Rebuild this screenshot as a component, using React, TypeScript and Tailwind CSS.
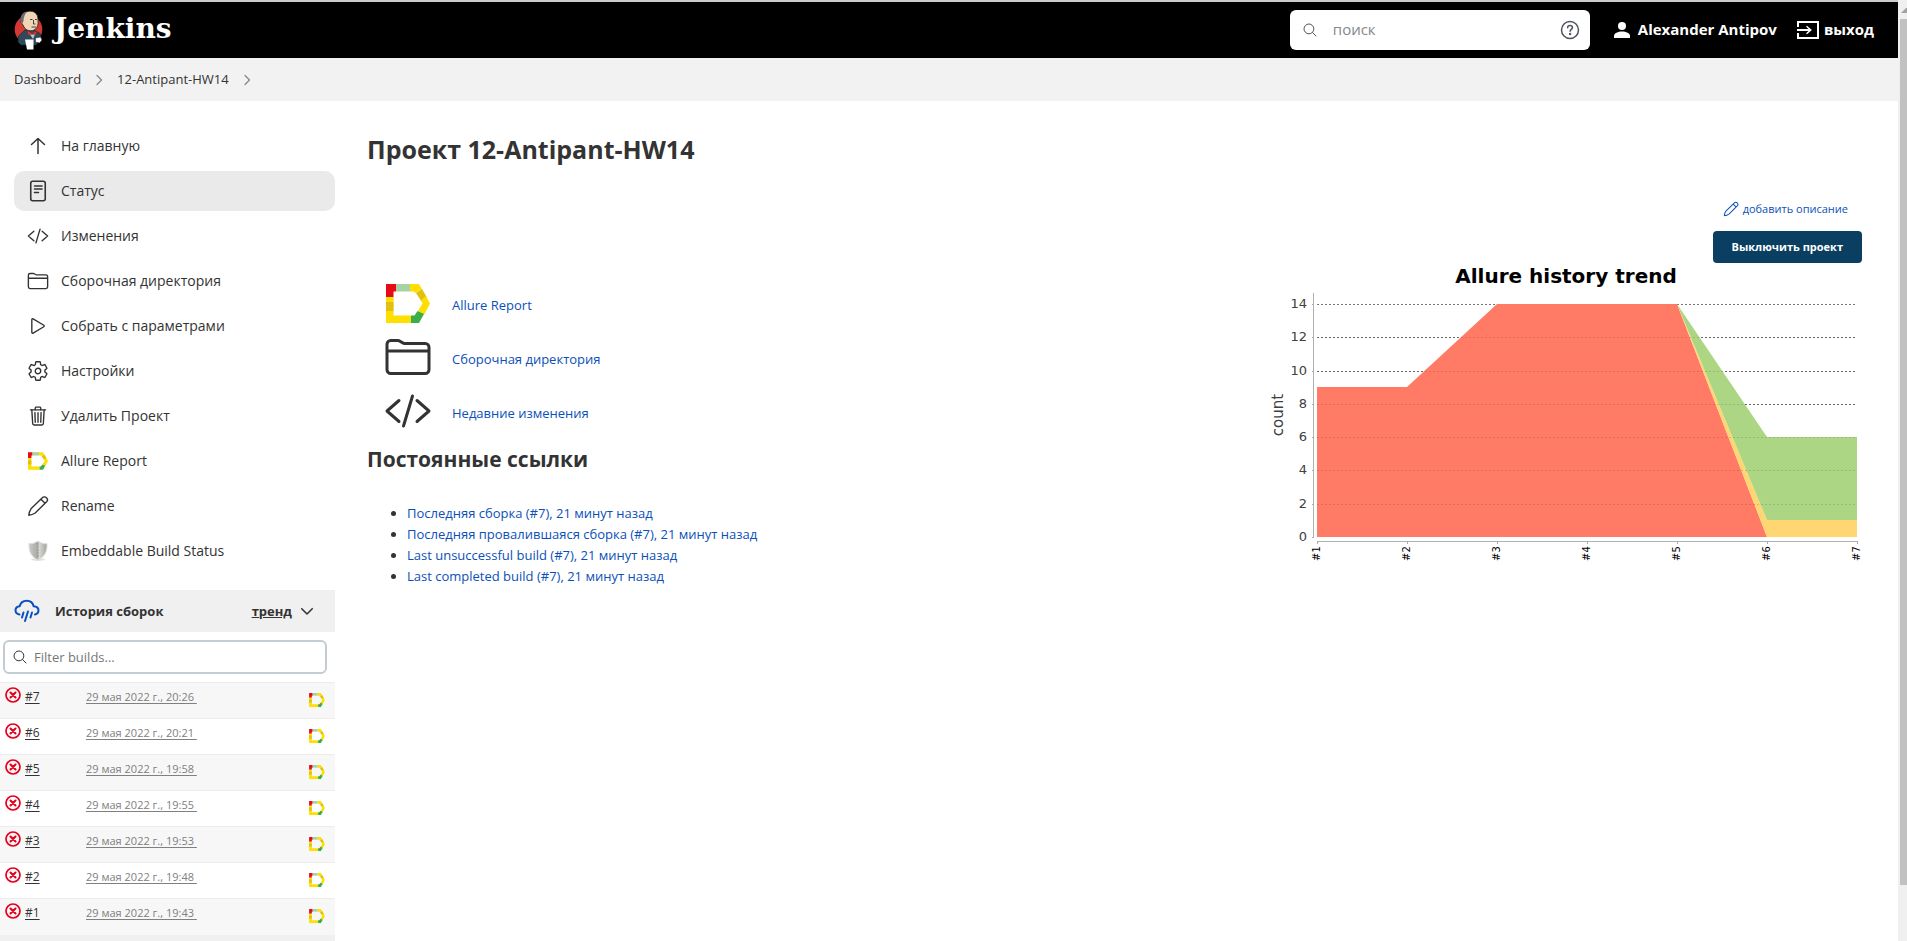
import React from "react";
import {
  IoCodeSlashOutline,
  IoFolderOutline,
  IoPlayOutline,
  IoSearchOutline,
  IoSettingsOutline,
  IoTrashOutline,
} from "react-icons/io5";

function JenkinsLogo() {
  return (
    <svg viewBox="0 0 30 40" className="h-10 w-[30px]" aria-hidden="true">
      <ellipse cx="14.5" cy="19.5" rx="13.8" ry="14" fill="#d33833" />
      <path d="M4.500 26 11 20h9l6 3.500 1.500 5L22 35H7L4 32z" fill="#2c4a5c" stroke="#14222b" strokeWidth=".6" />
      <path d="M7 9C8 3 13 .8 17 1.200c5 .5 7 4 7 8.500 0 3 .4 5-1 7.500-1.500 2.500-4 3.800-7 3.600-4-.3-6-3-7-6C7.500 13.500 6 12 7 9z" fill="#f0d6b7" stroke="#231f20" strokeWidth=".8" />
      <path d="M6.500 11C6 5 9.500 1.800 13 1.500 11 4 9.500 7 9.500 11l-1.300 3z" fill="#6d6b6d" />
      <path d="M16 9.500h2.500M21 9.500h2M19.500 10v4h2M17.500 17h4.500" stroke="#231f20" strokeWidth=".8" fill="none" />
      <path d="M13 20.500l5 2.500 4-2 .8 4-4.300-1.500-4.500 2z" fill="#d33833" stroke="#81211e" strokeWidth=".5" />
      <path d="M16 24.500h5l-2 4.500z" fill="#b9c7d2" />
      <path d="M11 29.500h8.500V39.500H13z" fill="#fff" />
      <path d="M21.500 28l5-1 1.500 3-2.500 3-4-1z" fill="#fff" stroke="#231f20" strokeWidth=".5" />
    </svg>
  );
}

function AllureIcon({ className }: { className: string }) {
  return (
    <svg viewBox="0 0 44 39" className={className} aria-hidden="true">
      <path d="M0 0h10v7.500H7.500V13H0z" fill="#e60b14" />
      <path d="M10 0h14v7.500H10z" fill="#a6d2a5" />
      <path d="M24 0h9l3 5-6.500 4-1.500-1.500h-4z" fill="#ffdf00" />
      <path d="M36 5l5 8.500-5.500 4L30 9z" fill="#e0c010" />
      <path d="M40 12l4 7.500L38 31l-6-4 4.500-7.500-1.500-3z" fill="#ffdf00" />
      <path d="M31.500 27l6.500 3-5 9h-8v-7.500h3.500z" fill="#3cae49" />
      <path d="M0 13h7.500v18.500H25V39H0z" fill="#ffdf00" />
      <path d="M0 18h7.500v9H0z" fill="#e0c010" />
    </svg>
  );
}

function ArrowUpIcon() {
  return (
    <svg viewBox="0 0 22 22" className="size-[22px]" fill="none" stroke="currentColor" strokeWidth="1.500" strokeLinecap="round" strokeLinejoin="round" aria-hidden="true">
      <path d="M4.500 9.500L11 3.500l6.500 6M11 4v14.500" />
    </svg>
  );
}

function StatusIcon() {
  return (
    <svg viewBox="0 0 22 22" className="size-[22px]" fill="none" stroke="currentColor" strokeWidth="1.600" strokeLinecap="round" aria-hidden="true">
      <rect x="3.750" y="1.250" width="14.500" height="19.500" rx="2" />
      <path d="M7.500 6h7.500M7.500 9h7.500M7.500 12.500h4" />
    </svg>
  );
}

function PencilIcon({ className }: { className: string }) {
  return (
    <svg viewBox="0 0 22 22" className={className} fill="none" stroke="currentColor" strokeWidth="1.400" strokeLinecap="round" strokeLinejoin="round" aria-hidden="true">
      <path d="M1.800 20.200c.2-2.500 1-4.700 2.200-6.400L15.300 2.800a2.900 2.900 0 0 1 4.300 4L8.200 18c-1.800 1.200-4 2-6.400 2.200zM14 4.200l4 4" />
    </svg>
  );
}

function ShieldIcon() {
  return (
    <svg viewBox="0 0 22 22" className="size-[22px]" aria-hidden="true">
      <defs>
        <linearGradient id="shield" x1="0" x2="1">
          <stop offset="0" stopColor="#c9c9c6" />
          <stop offset=".48" stopColor="#a9a9a5" />
          <stop offset=".55" stopColor="#d9d9d6" />
          <stop offset="1" stopColor="#a2a29e" />
        </linearGradient>
      </defs>
      <ellipse cx="11" cy="19.5" rx="7" ry="1.500" fill="#e2e2e2" />
      <path d="M2 3.500c3 .6 6-.5 9-2.500 3 2 6 3.100 9 2.500.3 7-1.500 13-9 16.500C3.500 16.500 1.700 10.500 2 3.500z" fill="url(#shield)" stroke="#deded9" strokeWidth="1" />
      <path d="M11 3v14" stroke="#8f8f8b" strokeWidth=".8" strokeDasharray="2 1" />
    </svg>
  );
}

function RainIcon() {
  return (
    <svg viewBox="0 0 26 24" className="h-6 w-[26px]" fill="none" stroke="#0b50c0" strokeWidth="2" strokeLinecap="round" strokeLinejoin="round" aria-hidden="true">
      <path d="M5.500 15.500C3 15 1.500 13.500 1.500 11.500c0-2.300 1.700-4 4.200-4.200C6.500 4 9.300 1.800 12.700 1.800c3.600 0 6.200 2.200 6.900 5.500 3 .2 4.900 1.900 4.900 4.300 0 2-1.200 3.500-3.500 3.900" />
      <path d="M9.500 13.500l-1.500 5M14 12.500l-3 9.500M18 13.500l-1.500 5" />
    </svg>
  );
}

function FailedIcon() {
  return (
    <svg viewBox="0 0 16 16" className="size-4" fill="none" stroke="#e6001f" aria-hidden="true">
      <circle cx="8" cy="8" r="7" strokeWidth="1.700" />
      <path d="M5.500 5.500l5 5M10.500 5.500l-5 5" strokeWidth="2.100" strokeLinecap="round" />
    </svg>
  );
}

function Chevron({ className }: { className: string }) {
  return (
    <svg viewBox="0 0 12 12" className={className} fill="none" stroke="currentColor" strokeWidth="1.300" strokeLinecap="round" strokeLinejoin="round" aria-hidden="true">
      <path d="M4 1.500L8.500 6 4 10.500" />
    </svg>
  );
}

const io = "size-[22px]";
const menu: { label: string; icon: React.ReactNode; active?: boolean }[] = [
  { label: "На главную", icon: <ArrowUpIcon /> },
  { label: "Статус", icon: <StatusIcon />, active: true },
  { label: "Изменения", icon: <IoCodeSlashOutline className={io} /> },
  { label: "Сборочная директория", icon: <IoFolderOutline className={io} /> },
  { label: "Собрать с параметрами", icon: <IoPlayOutline className={io} /> },
  { label: "Настройки", icon: <IoSettingsOutline className={io} /> },
  { label: "Удалить Проект", icon: <IoTrashOutline className={io} /> },
  { label: "Allure Report", icon: <AllureIcon className="h-[18px] w-5" /> },
  { label: "Rename", icon: <PencilIcon className="size-[22px]" /> },
  { label: "Embeddable Build Status", icon: <ShieldIcon /> },
];

const builds = [
  ["#7", "29 мая 2022 г., 20:26"],
  ["#6", "29 мая 2022 г., 20:21"],
  ["#5", "29 мая 2022 г., 19:58"],
  ["#4", "29 мая 2022 г., 19:55"],
  ["#3", "29 мая 2022 г., 19:53"],
  ["#2", "29 мая 2022 г., 19:48"],
  ["#1", "29 мая 2022 г., 19:43"],
];

const permalinks = [
  "Последняя сборка (#7), 21 минут назад",
  "Последняя провалившаяся сборка (#7), 21 минут назад",
  "Last unsuccessful build (#7), 21 минут назад",
  "Last completed build (#7), 21 минут назад",
];

function Header() {
  return (
    <header className="flex h-14 items-center bg-black pr-6 pl-[14px] text-white">
      <a href="#home" className="flex items-center gap-[10px]">
        <JenkinsLogo />
        <span className="pb-0.5 font-['DejaVu_Serif','Liberation_Serif',serif] text-[28px] leading-8 font-bold">Jenkins</span>
      </a>
      <div className="ml-auto flex h-10 w-[300px] items-center rounded-md bg-white pr-[10px] pl-3 text-[#4d545d]">
        <IoSearchOutline className="size-4 shrink-0" />
        <input aria-label="поиск" placeholder="поиск" className="ml-[15px] w-full min-w-0 text-[15px] text-[#333] outline-none placeholder:text-[#85888c]" />
        <a href="#search-help" aria-label="Справка" className="shrink-0">
          <svg viewBox="0 0 20 20" className="size-5" fill="none" stroke="currentColor" strokeWidth="1.500" strokeLinecap="round">
            <circle cx="10" cy="10" r="8.500" />
            <path d="M7.600 7.800c0-1.300 1-2.200 2.400-2.200s2.400.9 2.400 2.100c0 1.600-2.300 1.700-2.300 3.500" />
            <circle cx="10.100" cy="13.900" r=".5" fill="currentColor" />
          </svg>
        </a>
      </div>
      <a href="#user" className="ml-6 flex items-center gap-2 text-[15px] font-bold">
        <svg viewBox="0 0 16 16" className="size-4" fill="currentColor" aria-hidden="true">
          <circle cx="8" cy="4" r="4" />
          <path d="M0 16v-2c0-3 4-4.500 8-4.500s8 1.500 8 4.500v2z" />
        </svg>
        Alexander Antipov
      </a>
      <a href="#logout" className="ml-5 flex items-center gap-[5px] text-[15px] font-bold">
        <svg viewBox="0 0 22 18" className="h-[18px] w-[22px]" fill="none" stroke="currentColor" strokeWidth="2" aria-hidden="true">
          <path d="M1 6V1h20v16H1v-5M0 9h13" />
          <path d="M9.500 5.200L13.800 9l-4.300 3.800" strokeWidth="1.500" />
        </svg>
        выход
      </a>
    </header>
  );
}

function Sidebar() {
  return (
    <aside className="w-[335px] shrink-0 pt-[25px]">
      <nav className="flex flex-col gap-[5px] pl-[14px]">
        {menu.map((m) => (
          <a
            key={m.label}
            href="#task"
            className={
              m.active
                ? "flex h-10 items-center gap-3 rounded-[10px] bg-[#eaeaea] pl-[13px]"
                : "flex h-10 items-center gap-3 rounded-[10px] pl-[13px]"
            }
          >
            <span className="flex w-[22px] justify-center">{m.icon}</span>
            {m.label}
          </a>
        ))}
      </nav>
      <section className="mt-[19px]">
        <div className="flex h-[42px] items-center bg-[#f0f0f0] pr-[21px] pl-[14px]">
          <RainIcon />
          <h2 className="ml-[15px] text-[13px] font-bold">История сборок</h2>
          <a href="#trend" className="ml-auto flex items-center gap-2">
            <span className="text-[13px] font-bold underline">тренд</span>
            <Chevron className="size-[14px] rotate-90" />
          </a>
        </div>
        <div className="mt-2 mr-2 ml-[3px] flex h-[34px] items-center gap-[6px] rounded-md border-2 border-[#c3ccd1] px-[7px]">
          <IoSearchOutline className="size-4 shrink-0" />
          <input aria-label="Filter builds..." placeholder="Filter builds..." className="w-full min-w-0 text-[13px] outline-none placeholder:text-[#777]" />
        </div>
        <table className="mt-2 w-full table-fixed border-collapse text-xs">
          <tbody>
            {builds.map(([id, date]) => (
              <tr key={id} className="h-9 border-t border-[#ededed] align-top odd:bg-[#f7f7f7]">
                <td className="w-[86px] pt-1 pl-[5px]">
                  <span className="flex items-start gap-1">
                    <FailedIcon />
                    <a href="#build" className="pt-0.5 underline underline-offset-2">{id}</a>
                  </span>
                </td>
                <td className="pt-[6px] text-[11px] leading-4">
                  <a href="#build" className="whitespace-pre text-[#808080] underline underline-offset-2">{date + " "}</a>
                </td>
                <td className="w-[26px] pt-[10px]">
                  <a href="#allure" aria-label="Allure Report"><AllureIcon className="h-[14px] w-4" /></a>
                </td>
              </tr>
            ))}
          </tbody>
        </table>
        <div className="h-[7px] bg-[#f0f0f0]" />
      </section>
    </aside>
  );
}

const ticks = [0, 2, 4, 6, 8, 10, 12, 14];

function TrendChart() {
  const y = (v: number) => 280 - Math.round((v * 233) / 14);
  return (
    <svg viewBox="0 6 600 307" className="h-[307px] w-[600px]" role="img" aria-label="Allure history trend" fontFamily="'DejaVu Sans', sans-serif">
      <text x="304" y="26" textAnchor="middle" fontSize="20" fontWeight="bold" fill="#000">Allure history trend</text>
      {ticks.map((t) => (
        <g key={t}>
          {t > 0 && <path d={`M55 ${y(t) + 0.5}H595`} stroke="#777" strokeDasharray="2 2" />}
          <path d={`M50 ${y(t) + 0.5}h2`} stroke="#aaa" />
          <text x="45" y={y(t) + 4} textAnchor="end" fontSize="13" fill="#404040">{t}</text>
        </g>
      ))}
      <path d={`M55 280V${y(9)}H145L235 ${y(14)}H415L505 280z`} fill="#ff7b65" />
      <path d={`M415 ${y(14)}L505 ${y(1)}H595V280H505z`} fill="#ffd672" />
      <path d={`M415 ${y(14)}L505 ${y(6)}H595V${y(1)}H505z`} fill="#add684" />
      {ticks.slice(1, 7).map((t) => (
        <path key={t} d={`M55 ${y(t) + 0.5}H595`} stroke="#000" strokeOpacity=".13" strokeDasharray="2 2" />
      ))}
      <path d="M51.500 36V280M55 284.500H595" stroke="#b0b0b0" fill="none" />
      <text transform="translate(21 158) rotate(-90)" textAnchor="middle" fontSize="15" fill="#404040">count</text>
      {[1, 2, 3, 4, 5, 6, 7].map((n) => (
        <g key={n}>
          <path d={`M${55.5 + (n - 1) * 90} 284v3`} stroke="#aaa" />
          <text transform={`translate(${58 + (n - 1) * 90} 304) rotate(-90)`} fontSize="10" fill="#000">{`#${n}`}</text>
        </g>
      ))}
    </svg>
  );
}

export default function App() {
  return (
    <div className="flex h-screen overflow-hidden bg-white font-['Open_Sans','Noto_Sans',sans-serif] text-sm text-[#333]">
      <div className="min-w-0 flex-1 border-t-2 border-[#c9cccf]">
        <Header />
        <nav aria-label="breadcrumb" className="flex h-[43px] items-center gap-3 bg-[#f2f2f2] pl-[14px] text-[13px]">
          <a href="#dashboard">Dashboard</a>
          <Chevron className="size-3 text-[#888]" />
          <a href="#project">12-Antipant-HW14</a>
          <Chevron className="size-3 text-[#888]" />
        </nav>
        <div className="flex">
          <Sidebar />
          <main className="min-w-0 flex-1 pt-[30px] pr-9 pl-8">
            <h1 className="text-[25px] leading-9 font-bold">Проект 12-Antipant-HW14</h1>
            <div className="flex justify-between pt-8">
              <div className="pt-20">
                <div className="flex flex-col gap-[6px] pl-[17px] text-[13px] font-medium text-[#0b50b8]">
                  <a href="#allure" className="flex h-12 items-center gap-5"><AllureIcon className="h-[39px] w-12" /><span className="pt-1">Allure Report</span></a>
                  <a href="#ws" className="flex h-12 items-center gap-5"><IoFolderOutline className="size-12 text-[#333]" /><span className="pt-1">Сборочная директория</span></a>
                  <a href="#changes" className="flex h-12 items-center gap-5"><IoCodeSlashOutline className="size-12 text-[#333]" /><span className="pt-1">Недавние изменения</span></a>
                </div>
                <h2 className="mt-2 text-[21px] leading-8 font-bold">Постоянные ссылки</h2>
                <ul className="mt-7 list-disc pl-10 text-[13px] leading-[21px] font-medium">
                  {permalinks.map((p) => (
                    <li key={p}><a href="#permalink" className="text-[#0b50b8]">{p}</a></li>
                  ))}
                </ul>
              </div>
              <div className="flex w-[600px] shrink-0 flex-col items-end">
                <a href="#description" className="mr-[14px] flex h-5 items-center gap-1 text-[11px] font-medium text-[#0b50b8]">
                  <PencilIcon className="size-4" />добавить описание
                </a>
                <button className="mt-3 h-8 rounded bg-[#0a3f61] px-[19px] text-[11px] font-bold text-white">Выключить проект</button>
                <TrendChart />
              </div>
            </div>
          </main>
        </div>
      </div>
      <div className="flex w-[9px] shrink-0 flex-col items-end bg-[#f0f0f0]">
        <svg viewBox="0 0 7 5" className="mt-2 mb-[6px] h-[5px] w-[7px]" aria-hidden="true"><path d="M1 5l5-5h1v5z" fill="#a3a3a3" /></svg>
        <div className="h-[92%] w-[7px] bg-[#c1c1c1]" />
      </div>
    </div>
  );
}
